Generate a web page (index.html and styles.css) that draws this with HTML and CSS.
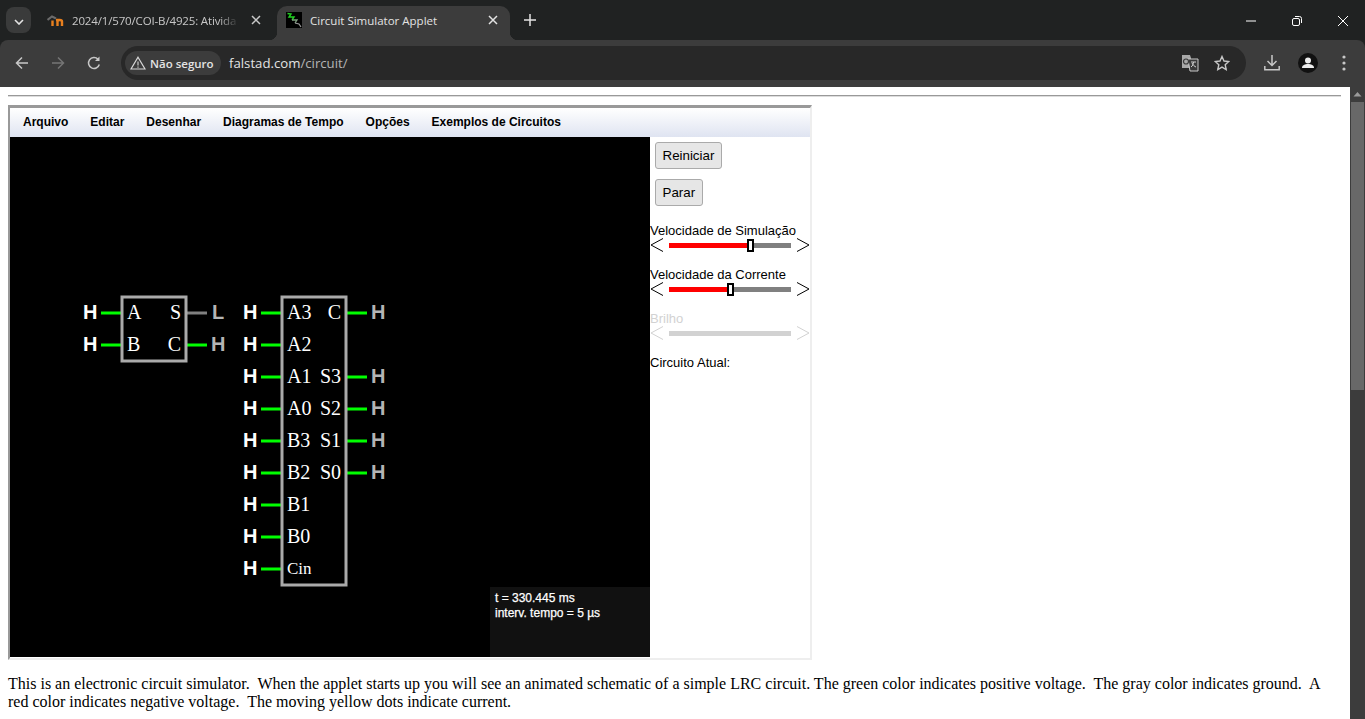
FILE: index.html
```html
<!DOCTYPE html>
<html lang="pt">
<head>
  <meta charset="UTF-8" />
  <title>Circuit Simulator Applet</title>
  <link rel="stylesheet" href="styles.css">
</head>
<body>
  <!-- browser window -->
  <div class="chrome">
    <div class="tabstrip">
      <button class="tab-search">
        <svg width="10" height="6" viewBox="0 0 10 6"><path d="M1 1l4 4 4-4" fill="none" stroke="#e3e3e3" stroke-width="1.6"/></svg>
      </button>
      <div class="tab">
        <svg class="favicon" width="18" height="16" viewBox="0 0 18 16"><path d="M0.500 8L5 4.500 9 6.500" fill="none" stroke="#6b6b6b" stroke-width="2"/><path d="M5.500 14V8.500M10.500 14V9.500c0-1 1-1.500 2.200-1.500s2.300.5 2.300 1.500V14M12.700 8H9" fill="none" stroke="#e8801f" stroke-width="2.400"/></svg>
        <span class="tab-title fade">2024/1/570/COI-B/4925: Ativida</span>
        <svg class="tab-close" width="10" height="10" viewBox="0 0 10 10"><path d="M1 1l8 8M9 1l-8 8" stroke="#c8c8c8" stroke-width="1.500"/></svg>
      </div>
      <div class="tab tab-active">
        <svg class="favicon fav-small" width="16" height="16" viewBox="0 0 16 16"><rect width="16" height="16" fill="#000"/><path d="M1.500 1.500L5 2 3 5 8 5 6 8" fill="none" stroke="#22d022" stroke-width="1.400"/><path d="M6 8l5 0-2 3" fill="none" stroke="#7f9f7f" stroke-width="1.300"/><path d="M9 11l4 1 2 3" fill="none" stroke="#9a9a9a" stroke-width="1.200"/></svg>
        <span class="tab-title">Circuit Simulator Applet</span>
        <svg class="tab-close" width="10" height="10" viewBox="0 0 10 10"><path d="M1 1l8 8M9 1l-8 8" stroke="#e3e3e3" stroke-width="1.500"/></svg>
      </div>
      <svg class="new-tab" width="12" height="12" viewBox="0 0 12 12"><path d="M6 0v12M0 6h12" stroke="#e3e3e3" stroke-width="1.500"/></svg>
      <div class="window-btns">
        <svg width="10" height="2" viewBox="0 0 10 2"><path d="M0 1h10" stroke="#fff"/></svg>
        <svg width="10" height="10" viewBox="0 0 10 10"><rect x=".5" y="2.500" width="7" height="7" rx="1.500" fill="none" stroke="#fff"/><path d="M3 .5h4.500a2 2 0 0 1 2 2V7" fill="none" stroke="#fff"/></svg>
        <svg width="10" height="10" viewBox="0 0 10 10"><path d="M0 0l10 10M10 0L0 10" stroke="#fff"/></svg>
      </div>
    </div>

    <div class="toolbar">
      <svg class="nav-icon" width="16" height="16" viewBox="0 0 16 16"><path d="M14 8H2.500M8 2.500L2.500 8 8 13.500" fill="none" stroke="#c7c7c7" stroke-width="1.500"/></svg>
      <svg class="nav-icon" width="16" height="16" viewBox="0 0 16 16"><path d="M2 8h11.500M8 2.500L13.500 8 8 13.500" fill="none" stroke="#757575" stroke-width="1.500"/></svg>
      <svg class="nav-icon" width="16" height="16" viewBox="0 0 16 16"><path d="M13.300 9.500A5.500 5.500 0 1 1 12 4.200" fill="none" stroke="#c7c7c7" stroke-width="1.500"/><path d="M13.500 1.500v4.500H9z" fill="#c7c7c7"/></svg>
      <div class="omnibox">
        <div class="chip">
          <svg width="16" height="14" viewBox="0 0 16 14"><path d="M8 1.200L15 13H1z" fill="none" stroke="#d8d8d8" stroke-width="1.200"/><path d="M8 5.500v4M8 10.500v1.200" stroke="#d8d8d8" stroke-width="1.100"/></svg>
          <span>Não seguro</span>
        </div>
        <span class="url">falstad.com<span class="url-path">/circuit/</span></span>
        <svg class="omni-icon" width="18" height="18" viewBox="0 0 18 18"><path d="M1 1h8l1 3v10H1z" fill="#a8a8a8"/><path d="M7 5h10v12H9z" fill="#3a3a3a" stroke="#c8c8c8"/><circle cx="5" cy="7.500" r="2.500" fill="none" stroke="#3a3a3a" stroke-width="1.200"/><path d="M10 8h5M12.500 8c0 2-1 4-2.500 5M11 9c1 2 2.500 3.500 4 4" fill="none" stroke="#d0d0d0"/></svg>
        <svg class="omni-icon" width="16" height="16" viewBox="0 0 16 16"><path d="M8 1.500l2 4.500 4.800.5-3.600 3.200 1 4.800L8 12.100l-4.200 2.400 1-4.800L1.200 6.500 6 6z" fill="none" stroke="#c7c7c7" stroke-width="1.400"/></svg>
      </div>
      <svg class="tool-icon" width="16" height="16" viewBox="0 0 16 16"><path d="M8 0v10M3.500 6L8 10.500 12.500 6M.8 11v3.800h14.400V11" fill="none" stroke="#c7c7c7" stroke-width="1.500"/></svg>
      <svg class="tool-icon" width="20" height="20" viewBox="0 0 20 20"><circle cx="10" cy="10" r="10" fill="#111"/><circle cx="10" cy="7.500" r="3" fill="#eee"/><path d="M4 15c0-3 3-4 6-4s6 1 6 4z" fill="#eee"/></svg>
      <svg class="tool-icon kebab" width="4" height="16" viewBox="0 0 4 16"><circle cx="2" cy="2" r="1.600" fill="#c7c7c7"/><circle cx="2" cy="8" r="1.600" fill="#c7c7c7"/><circle cx="2" cy="14" r="1.600" fill="#c7c7c7"/></svg>
    </div>
  </div>

  <div class="viewport">
    <div class="page">
      <hr class="rule">

      <!-- applet -->
      <div class="applet">
        <div class="menubar">
          <span>Arquivo</span>
          <span>Editar</span>
          <span>Desenhar</span>
          <span>Diagramas de Tempo</span>
          <span>Opções</span>
          <span>Exemplos de Circuitos</span>
        </div>
        <div class="applet-body">
          <div class="canvas">
            <svg class="circuit" width="640" height="520" viewBox="10 137 640 520">
              <g class="wires">
                <path d="M101 313h20M101 345h20M187 345h20"/>
                <path d="M261 313h20M261 345h20M261 377h20M261 409h20M261 441h20M261 473h20M261 505h20M261 537h20M261 569h20"/>
                <path d="M347 313h20M347 377h20M347 409h20M347 441h20M347 473h20"/>
              </g>
              <path class="wire-low" d="M187 313h20"/>
              <rect class="chip-box" x="122" y="297" width="64" height="64"/>
              <rect class="chip-box" x="282" y="297" width="64" height="288"/>

              <g class="logic-in">
                <text x="83" y="319">H</text>
                <text x="83" y="351">H</text>
                <text x="243" y="319">H</text>
                <text x="243" y="351">H</text>
                <text x="243" y="383">H</text>
                <text x="243" y="415">H</text>
                <text x="243" y="447">H</text>
                <text x="243" y="479">H</text>
                <text x="243" y="511">H</text>
                <text x="243" y="543">H</text>
                <text x="243" y="575">H</text>
              </g>
              <g class="logic-out">
                <text x="212" y="319">L</text>
                <text x="211" y="351">H</text>
                <text x="371" y="319">H</text>
                <text x="371" y="383">H</text>
                <text x="371" y="415">H</text>
                <text x="371" y="447">H</text>
                <text x="371" y="479">H</text>
              </g>
              <g class="pin">
                <text x="127" y="319">A</text>
                <text x="127" y="351">B</text>
                <text x="181" y="319" text-anchor="end">S</text>
                <text x="181" y="351" text-anchor="end">C</text>
                <text x="287" y="319">A3</text>
                <text x="287" y="351">A2</text>
                <text x="287" y="383">A1</text>
                <text x="287" y="415">A0</text>
                <text x="287" y="447">B3</text>
                <text x="287" y="479">B2</text>
                <text x="287" y="511">B1</text>
                <text x="287" y="543">B0</text>
                <text class="pin-small" x="287" y="574">Cin</text>
                <text x="341" y="319" text-anchor="end">C</text>
                <text x="341" y="383" text-anchor="end">S3</text>
                <text x="341" y="415" text-anchor="end">S2</text>
                <text x="341" y="447" text-anchor="end">S1</text>
                <text x="341" y="479" text-anchor="end">S0</text>
              </g>
            </svg>
            <div class="status">t = 330.445 ms<br>interv. tempo = 5 µs</div>
          </div>

          <div class="side">
            <button class="side-btn">Reiniciar</button>
            <button class="side-btn">Parar</button>

            <div class="slider-label">Velocidade de Simulação</div>
            <div class="slider">
              <svg width="14" height="16" viewBox="0 0 14 16"><path d="M13 1.500L1 8l12 6.500" fill="none" stroke="#000"/></svg>
              <div class="track"><div class="fill" style="width:80px"></div><div class="thumb" style="left:78px"></div></div>
              <svg width="14" height="16" viewBox="0 0 14 16"><path d="M1 1.500L13 8 1 14.500" fill="none" stroke="#000"/></svg>
            </div>

            <div class="slider-label">Velocidade da Corrente</div>
            <div class="slider">
              <svg width="14" height="16" viewBox="0 0 14 16"><path d="M13 1.500L1 8l12 6.500" fill="none" stroke="#000"/></svg>
              <div class="track"><div class="fill" style="width:60px"></div><div class="thumb" style="left:58px"></div></div>
              <svg width="14" height="16" viewBox="0 0 14 16"><path d="M1 1.500L13 8 1 14.500" fill="none" stroke="#000"/></svg>
            </div>

            <div class="slider-label disabled">Brilho</div>
            <div class="slider slider-disabled">
              <svg width="14" height="16" viewBox="0 0 14 16"><path d="M13 1.500L1 8l12 6.500" fill="none" stroke="#d2d2d2"/></svg>
              <div class="track"></div>
              <svg width="14" height="16" viewBox="0 0 14 16"><path d="M1 1.500L13 8 1 14.500" fill="none" stroke="#d2d2d2"/></svg>
            </div>

            <div class="slider-label">Circuito Atual:</div>
          </div>
        </div>
      </div>

      <p class="intro">This is an electronic circuit simulator.&nbsp; When the applet starts up you will see an animated schematic of a simple LRC circuit. The green color indicates positive voltage.&nbsp; The gray color indicates ground.&nbsp; A red color indicates negative voltage.&nbsp; The moving yellow dots indicate current.</p>
    </div>

    <div class="scrollbar">
      <svg width="15" height="15" viewBox="0 0 15 15"><path d="M3.500 9.500L7.500 5l4 4.500z" fill="#9a9a9a"/></svg>
      <div class="scroll-thumb"></div>
    </div>
  </div>
</body>
</html>
```

FILE: styles.css
```css
html, body {
  margin: 0;
  height: 719px;
  overflow: hidden;
}
body {
  background: #fff;
  color: #000;
  font-family: "Liberation Serif", serif;
}

.chrome {
  background: #202222;
}

/* tab strip */
.tabstrip {
  display: flex;
  align-items: flex-end;
  height: 40px;
  font-family: "Open Sans", sans-serif;
  font-size: 11.5px;
}
.tab-search {
  width: 25px;
  height: 26px;
  margin: 0 6px 7px 6px;
  padding: 0;
  border: 0;
  border-radius: 8px;
  background: #3a3b3b;
}
.tab {
  position: relative;
  display: flex;
  align-items: center;
  box-sizing: border-box;
  width: 238px;
  height: 34px;
  padding: 0 14px 6px 10px;
  color: #c7c7c7;
}
.tab-active {
  width: 233px;
  margin-left: 2px;
  padding: 0 12px 6px 9px;
  border-radius: 10px 10px 0 0;
  background: #3c3c3c;
  color: #e3e3e3;
}
.tab-active::before,
.tab-active::after {
  content: "";
  position: absolute;
  bottom: 0;
  width: 8px;
  height: 8px;
}
.tab-active::before {
  left: -8px;
  background: radial-gradient(circle at 0 0, transparent 8px, #3c3c3c 8.500px);
}
.tab-active::after {
  right: -8px;
  background: radial-gradient(circle at 100% 0, transparent 8px, #3c3c3c 8.500px);
}
.favicon {
  flex: none;
  margin-right: 7px;
}
.fav-small {
  margin-right: 8px;
}
.tab-title {
  flex: 1;
  overflow: hidden;
  white-space: nowrap;
}
.fade {
  letter-spacing: -0.15px;
  -webkit-mask-image: linear-gradient(to right, #000 88%, transparent);
  mask-image: linear-gradient(to right, #000 88%, transparent);
}
.tab-close {
  flex: none;
  margin-left: 12px;
}
.new-tab {
  margin: 0 0 14px 14px;
}
.window-btns {
  display: flex;
  align-items: center;
  gap: 36px;
  margin: 0 17px 14px auto;
}

/* toolbar */
.toolbar {
  display: flex;
  align-items: center;
  box-sizing: border-box;
  height: 47px;
  padding: 0 0 1px 14px;
  border-radius: 8px 8px 0 0;
  background: #3c3c3c;
}
.nav-icon {
  flex: none;
  margin-right: 20px;
}
.omnibox {
  display: flex;
  align-items: center;
  flex: none;
  box-sizing: border-box;
  width: 1125px;
  height: 34px;
  margin-left: -1px;
  padding: 0 16px 0 4px;
  border-radius: 17px;
  background: #282828;
  font-family: "Open Sans", sans-serif;
}
.chip {
  display: flex;
  align-items: center;
  gap: 4px;
  box-sizing: border-box;
  width: 96px;
  height: 24px;
  padding-left: 5px;
  border-radius: 12px;
  background: #3c3c3c;
  color: #e3e3e3;
  font-size: 11.500px;
  font-weight: 600;
  white-space: nowrap;
}
.url {
  flex: 1;
  margin-left: 8px;
  color: #e3e3e3;
  font-size: 13.200px;
}
.url-path {
  color: #b4b4b4;
}
.omni-icon {
  flex: none;
  margin-left: 15px;
}
.tool-icon {
  flex: none;
  margin-left: 18px;
}
.tool-icon.kebab {
  margin-left: 24px;
}

/* page area */
.viewport {
  display: flex;
  height: 632px;
}
.page {
  flex: 1;
  min-width: 0;
  padding: 8px 9px 0 8px;
}
.rule {
  height: 0;
  margin: 0 0 8px;
  border: 0;
  border-top: 1px solid #999;
  border-bottom: 1px solid #ddd;
}
.scrollbar {
  flex: none;
  width: 15px;
  background: #3c3c3c;
}
.scrollbar svg {
  display: block;
}
.scroll-thumb {
  height: 288px;
  margin: 0 1px;
  background: #686868;
}

/* applet */
.applet {
  box-sizing: border-box;
  width: 804px;
  height: 555px;
  border: 2px solid #eee;
  border-top: 3px solid #999;
  border-left: 2px solid #999;
}
.menubar {
  display: flex;
  align-items: center;
  gap: 22px;
  box-sizing: border-box;
  height: 29px;
  padding: 0 0 2px 13px;
  background: linear-gradient(to bottom, #fff, #dfe4f1);
  font-family: "Liberation Sans", Arial, sans-serif;
  font-size: 12px;
  font-weight: bold;
}
.applet-body {
  display: flex;
  height: 520px;
}
.canvas {
  position: relative;
  flex: none;
  width: 640px;
  height: 520px;
  background: #000;
}
.circuit {
  display: block;
}
.wires path {
  fill: none;
  stroke: #0f0;
  stroke-width: 3;
}
.wire-low {
  fill: none;
  stroke: #808080;
  stroke-width: 3;
}
.chip-box {
  fill: none;
  stroke: #aaa;
  stroke-width: 3;
}
.logic-in text,
.logic-out text {
  font-family: "Liberation Sans", Arial, sans-serif;
  font-size: 20px;
  font-weight: bold;
}
.logic-in text {
  fill: #fff;
}
.logic-out text {
  fill: #b4b4b4;
}
.pin text {
  fill: #fff;
  font-family: "Liberation Serif", serif;
  font-size: 20px;
}
.pin .pin-small {
  font-size: 17px;
}
.status {
  position: absolute;
  right: 0;
  bottom: 0;
  box-sizing: border-box;
  width: 160px;
  height: 70px;
  padding: 4px 5px;
  background: #111;
  color: #fff;
  font-family: "Liberation Sans", Arial, sans-serif;
  font-size: 12px;
  line-height: 15px;
  -webkit-text-stroke: 0.25px #fff;
}

/* side panel */
.side {
  flex: 1;
  font-family: "Liberation Sans", Arial, sans-serif;
  font-size: 13px;
}
.side-btn {
  display: block;
  box-sizing: border-box;
  height: 27px;
  margin: 5px 0 10px 5px;
  padding: 0 6.500px;
  border: 1px solid #aaa;
  border-radius: 3px;
  background: #e6e6e6;
  color: #000;
  font-family: "Liberation Sans", Arial, sans-serif;
  font-size: 13.330px;
}
.side-btn + .side-btn {
  margin-bottom: 16px;
}
.slider-label {
  height: 15px;
  line-height: 17px;
  white-space: nowrap;
}
.disabled {
  color: #d2d2d2;
}
.slider {
  display: flex;
  align-items: center;
  gap: 5px;
  height: 16px;
  margin-bottom: 13px;
}
.track {
  position: relative;
  flex: none;
  width: 122px;
  height: 5px;
  background: #808080;
}
.fill {
  height: 5px;
  background: #f00;
}
.thumb {
  position: absolute;
  top: -4px;
  box-sizing: border-box;
  width: 7px;
  height: 13px;
  border: 2px solid #000;
  background: #fff;
}
.slider-disabled .track {
  background: #d2d2d2;
}

.intro {
  width: 1322px;
  margin: 15px 0 0;
  font-size: 16px;
  line-height: 18px;
}
```
